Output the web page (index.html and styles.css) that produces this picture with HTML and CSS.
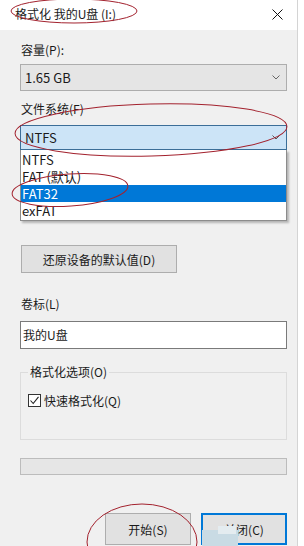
FILE: index.html
```html
<!DOCTYPE html>
<html lang="zh-CN">
<head>
    <meta charset="UTF-8">
    <title>格式化 我的U盘 (I:)</title>
    <link rel="stylesheet" href="styles.css">
</head>
<body>
    <div class="window">
        <!-- title bar -->
        <div class="titlebar">
            <span class="title">格式化 我的U盘 (I:)</span>
            <svg class="close" width="11" height="11" viewBox="0 0 11 11">
                <path d="M0.5 0.5 L10.5 10.5 M10.5 0.5 L0.5 10.5" stroke="#111" stroke-width="1" fill="none"/>
            </svg>
        </div>

        <div class="content">
            <div class="label first">容量(P):</div>
            <div class="combo">
                <span>1.65 GB</span>
                <svg class="chevron" width="8" height="5" viewBox="0 0 8 5">
                    <path d="M0.5 0.5 L4 4 L7.5 0.5" stroke="#666" fill="none"/>
                </svg>
            </div>

            <div class="label">文件系统(F)</div>
            <div class="combo active">
                <span>NTFS</span>
                <svg class="chevron" width="8" height="5" viewBox="0 0 8 5">
                    <path d="M0.5 0.5 L4 4 L7.5 0.5" stroke="#555" fill="none"/>
                </svg>
            </div>
            <ul class="dropdown">
                <li>NTFS</li>
                <li>FAT (默认)</li>
                <li class="selected">FAT32</li>
                <li>exFAT</li>
            </ul>

            <button class="button restore">还原设备的默认值(D)</button>

            <div class="label volume">卷标(L)</div>
            <div class="textbox">我的U盘</div>

            <fieldset class="options">
                <legend>格式化选项(O)</legend>
                <div class="check-row">
                    <span class="checkbox">
                        <svg width="11" height="11" viewBox="0 0 11 11">
                            <path d="M1.5 5.5 L4.2 8.5 L9.5 1.8" stroke="#222" stroke-width="1.1" fill="none"/>
                        </svg>
                    </span>
                    <span>快速格式化(Q)</span>
                </div>
            </fieldset>

            <div class="progress"></div>

            <div class="actions">
                <button class="button">开始(S)</button>
                <button class="button default">关闭(C)</button>
            </div>
        </div>

        <!-- watermark smudge over the close button -->
        <div class="smudge smudge-a"></div>
        <div class="smudge smudge-b"></div>

        <!-- hand-drawn red annotations -->
        <svg class="marks" width="304" height="546" viewBox="0 0 304 546">
            <g stroke="#a3222e" stroke-width="1" fill="none">
                <ellipse cx="74" cy="11" rx="63" ry="12"/>
                <ellipse cx="151" cy="130" rx="136" ry="26" transform="rotate(-1.5 151 130)"/>
                <ellipse cx="70" cy="190" rx="58" ry="16" transform="rotate(-4 70 190)"/>
                <ellipse cx="142" cy="542" rx="55" ry="38"/>
            </g>
        </svg>
    </div>
</body>
</html>
```

FILE: styles.css
```css
body {
    margin: 0;
    background-color: #ffffff;
    font-family: "Noto Sans CJK SC", "Noto Sans", sans-serif;
    font-size: 12px;
    color: #1a1a1a;
}

.window {
    position: relative;
    width: 297px;
    height: 546px;
    border-right: 1px solid #d4d4d4;
    background-color: #f0f0f0;
    overflow: hidden;
}

.titlebar {
    height: 28px;
    background-color: #ffffff;
    display: flex;
    align-items: center;
    justify-content: space-between;
    padding: 0 14px 2px 15px;
}

.title {
    line-height: 16px;
}

.content {
    padding: 0 10px 0 20px;
}

.label {
    line-height: 16px;
    margin-top: 10px;
    padding-left: 1px;
}

.label.first {
    margin-top: 12px;
}

.combo {
    margin-top: 6px;
    height: 27px;
    box-sizing: border-box;
    border: 1px solid #adadad;
    background-color: #e5e5e5;
    display: flex;
    align-items: center;
    justify-content: space-between;
    padding: 0 6px 0 4px;
    font-size: 13px;
}

.combo.active {
    margin-top: 8px;
    height: 25px;
    border-color: #3b6e98;
    background-color: #cce4f7;
}

.dropdown {
    list-style: none;
    margin: 0;
    padding: 1px 0;
    border: 1px solid #8c8c8c;
    border-top: none;
    background-color: #ffffff;
    box-shadow: 2px 2px 2px rgba(0, 0, 0, 0.25);
    font-size: 13px;
}

.dropdown li {
    height: 17px;
    line-height: 17px;
    padding-left: 1px;
}

.dropdown li.selected {
    background-color: #0078d7;
    color: #ffffff;
}

.button {
    font-family: inherit;
    font-size: 12px;
    color: #1a1a1a;
    background-color: #e1e1e1;
    border: 1px solid #adadad;
    height: 28px;
    padding: 0;
}

.restore {
    display: block;
    margin: 24px 0 0 1px;
    width: 156px;
}

.label.volume {
    margin-top: 23px;
}

.textbox {
    margin-top: 9px;
    height: 28px;
    box-sizing: border-box;
    border: 1px solid #7a7a7a;
    background-color: #ffffff;
    line-height: 26px;
    padding-left: 2px;
}

.options {
    margin: 15px 0 0;
    padding: 0 6px 0 7px;
    height: 74px;
    border: 1px solid #dcdcdc;
}

.options legend {
    padding: 0 2px;
    line-height: 16px;
}

.check-row {
    display: flex;
    align-items: center;
    gap: 3px;
    margin-top: 12px;
}

.checkbox {
    width: 13px;
    height: 13px;
    box-sizing: border-box;
    border: 1px solid #333333;
    background-color: #ffffff;
    display: flex;
    align-items: center;
    justify-content: center;
}

.progress {
    margin-top: 18px;
    height: 17px;
    box-sizing: border-box;
    border: 1px solid #bcbcbc;
    background-color: #e6e6e6;
}

.actions {
    display: flex;
    justify-content: flex-end;
    gap: 10px;
    margin-top: 38px;
}

.actions .button {
    width: 86px;
    height: 32px;
}

.actions .default {
    border: 2px solid #0078d7;
}

.smudge {
    position: absolute;
    background-color: #c9dbe4;
}

.smudge-a {
    left: 202px;
    top: 530px;
    width: 36px;
    height: 16px;
}

.smudge-b {
    left: 218px;
    top: 526px;
    width: 18px;
    height: 8px;
    background-color: #e4ecf0;
}

.marks {
    position: absolute;
    left: 0;
    top: 0;
    pointer-events: none;
}
```
